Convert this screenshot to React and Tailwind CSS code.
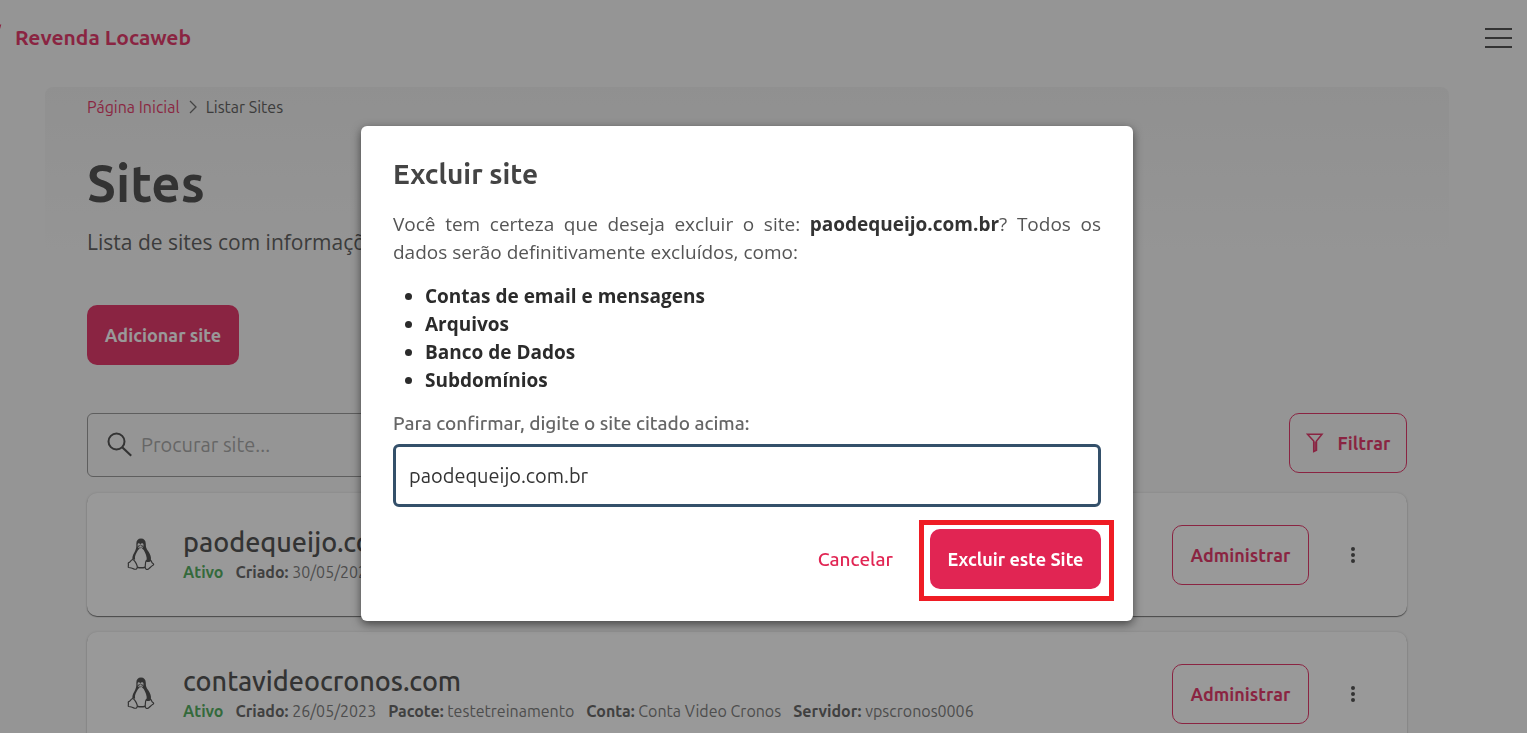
import React from "react";

const uiFont = "font-['Ubuntu','Noto_Sans',sans-serif]";

const sites = [
  {
    domain: "paodequeijo.com.br",
    status: "Ativo",
    details: [["Criado", "30/05/2023"]],
  },
  {
    domain: "contavideocronos.com",
    status: "Ativo",
    details: [
      ["Criado", "26/05/2023"],
      ["Pacote", "testetreinamento"],
      ["Conta", "Conta Video Cronos"],
      ["Servidor", "vpscronos0006"],
    ],
  },
];

const deletedItems = [
  "Contas de email e mensagens",
  "Arquivos",
  "Banco de Dados",
  "Subdomínios",
];

function LinuxIcon() {
  return (
    <svg viewBox="0 0 28 33" className="h-[33px] w-7 shrink-0" fill="none" aria-hidden="true">
      <path
        d="M9.300 6C9.300 2.500 11 .6 14 .6s4.800 2 4.800 5.400c0 4 1 5 2.800 7.800 1.700 2.700 2.700 5 2.300 8.200l-1.200 1.500-3-.8c.4-3.900-1.200-7.700-3-10.700l-2.700-2.500-2.900 2.500c-2 3.600-3.700 5.900-3 9.700l-2.800-.5c-.2-3 1.500-5.600 2.800-8.100C9.400 10 9.400 9 9.300 6z"
        fill="#333"
      />
      <path
        d="M10.600 6.500c.2-1.600 2-1.600 2.700 0 .7-1.600 2.900-1.600 3.200.2.400 2.300-1.200 4-3.100 4s-3-1.900-2.800-4.200z"
        fill="#f3f3f3"
      />
      <path d="M11 8.200l2.400-1.100 2.800 1.100-2.800 1.600z" stroke="#333" strokeWidth=".7" />
      <path
        d="M5.500 21.500c1.500 0 3.800 4 4.600 6.200.8 2.400-.7 4-2.800 3.400-1.800-.7-3.700-1.300-5.600-1.600-1-.3-.2-1.500-.3-2.700 0-1.300-.6-1.800.3-2.200 1.700-.4 2-2.400 3.800-3.100z"
        stroke="#333"
        strokeWidth="1.200"
      />
      <path
        d="M19.300 22.500c1 1.200 2.600 1.500 4.200-.2 1 0 .8 2.300 2.500 3.200 1 .6.8 1.300-.1 1.800-1.900 1-3.200 3-4.700 3.900-1.800.8-3.200-.3-3-2.300.3-2.100-.1-4.700 1.100-6.400z"
        stroke="#333"
        strokeWidth="1.200"
      />
      <path d="M10.200 29.300c2.800.8 5.400.7 8 0" stroke="#333" strokeWidth="1.500" />
    </svg>
  );
}

function SearchIcon() {
  return (
    <svg viewBox="0 0 26 26" className="size-[26px] shrink-0" fill="none" stroke="#333" strokeWidth="2" aria-hidden="true">
      <circle cx="9.500" cy="9.500" r="8" />
      <path d="M15.200 15.200l9 8.500" strokeWidth="2.200" />
    </svg>
  );
}

function FilterIcon() {
  return (
    <svg viewBox="0 0 18 20" className="h-5 w-[18px] shrink-0" fill="none" stroke="currentColor" strokeWidth="1.500" aria-hidden="true">
      <path d="M1.500 1.200h14.500L10.500 8v9.200l-2.800 1.300V8z" />
      <path d="M9.100 8.500v9" />
    </svg>
  );
}

function SiteCard({ site }) {
  return (
    <li className="flex h-[123px] items-center rounded-[10px] bg-white pr-[42px] pl-10 shadow-[0_1px_1px_rgba(0,0,0,0.6),0_0_3px_rgba(0,0,0,0.15)]">
      <LinuxIcon />
      <div className="mb-0.5 ml-7 flex-1">
        <h2 className="text-[27px] leading-9 font-medium text-[#333]">{site.domain}</h2>
        <p className="flex gap-3 text-base leading-6 text-[#666]">
          <span className="font-semibold text-[#35a145]">{site.status}</span>
          {site.details.map(([label, value]) => (
            <span key={label}>
              <b className="font-semibold text-[#4d4d4d]">{label}:</b> {value}
            </span>
          ))}
        </p>
      </div>
      <button type="button" className="h-[60px] w-[137px] rounded-[10px] border border-[#e11550] text-lg font-semibold text-[#e11550]">
        Administrar
      </button>
      <button type="button" aria-label="Mais opções" className="ml-8 flex w-6 justify-center">
        <svg viewBox="0 0 6 18" className="h-[18px] w-1.5" fill="#333" aria-hidden="true">
          <circle cx="3" cy="3" r="2" />
          <circle cx="3" cy="9" r="2" />
          <circle cx="3" cy="15" r="2" />
        </svg>
      </button>
    </li>
  );
}

function DeleteDialog() {
  return (
    <div className="fixed inset-0 flex items-start justify-center bg-[#333]/50 pt-[126px] pr-[33px]">
      <div
        role="dialog"
        aria-modal="true"
        aria-labelledby="dialog-title"
        className="w-full max-w-[772px] rounded-md bg-white p-8 font-['Open_Sans',sans-serif] shadow-[0_3px_10px_rgba(0,0,0,0.55)]"
      >
        <h2 id="dialog-title" className={`${uiFont} text-[28px] leading-8 font-bold text-[#444]`}>
          Excluir site
        </h2>
        <p className="mt-5 text-justify text-[19px] leading-7 text-[#555]">
          Você tem certeza que deseja excluir o site:{" "}
          <strong className="font-bold text-[#333]">paodequeijo.com.br</strong>? Todos os dados serão
          definitivamente excluídos, como:
        </p>
        <ul className="mt-4 list-disc pl-8 text-[19px] leading-7 font-bold text-[#2b2b2b]">
          {deletedItems.map((item) => (
            <li key={item}>{item}</li>
          ))}
        </ul>
        <div className={uiFont}>
          <label htmlFor="confirm-site" className="mt-4 block text-[19px] leading-[26px] font-medium text-[#666]">
            Para confirmar, digite o site citado acima:
          </label>
          <input
            id="confirm-site"
            type="text"
            defaultValue="paodequeijo.com.br"
            className="mt-2 block h-[63px] w-full rounded-md border-[3px] border-[#34506a] px-[13px] text-[20px] text-[#333] outline-none"
          />
          <div className="mt-[22px] flex items-center justify-end">
            <button type="button" className="h-[60px] px-[37px] text-[19px] font-medium text-[#e12553]">
              Cancelar
            </button>
            <div className="relative">
              <button type="button" className="h-[60px] w-[171px] rounded-[10px] bg-[#e12553] text-lg font-semibold text-white">
                Excluir este Site
              </button>
              <span className="pointer-events-none absolute -top-[9px] -right-[13px] -bottom-3 -left-[11px] border-5 border-[#ef1c24]" />
            </div>
          </div>
        </div>
      </div>
    </div>
  );
}

export default function App() {
  return (
    <div className={`${uiFont} h-screen overflow-hidden bg-[#f7f7f7]`}>
      <header className="flex h-[87px] items-start justify-between pr-[15px]">
        <div className="flex pt-[22px]">
          <svg viewBox="0 0 15 8" className="h-2 w-[15px]" aria-hidden="true">
            <path d="M0 2.500h1.300L0 7z" fill="#e11550" />
          </svg>
          <a href="#" className="text-[21px] leading-[30px] font-semibold text-[#e11550]">
            Revenda Locaweb
          </a>
        </div>
        <button type="button" aria-label="Menu" className="flex flex-col gap-[7px] pt-7">
          <span className="h-0.5 w-[27px] bg-[#333]" />
          <span className="h-0.5 w-[27px] bg-[#333]" />
          <span className="h-0.5 w-[27px] bg-[#333]" />
        </button>
      </header>

      <main className="mr-[78px] ml-[45px] rounded-lg bg-[linear-gradient(#ededed,#f7f7f7_180px)] px-[42px]">
        <nav aria-label="Breadcrumb" className="flex items-center gap-2 pt-2 text-base leading-6">
          <a href="#" className="text-[#e11550]">
            Página Inicial
          </a>
          <svg viewBox="0 0 10 14" className="h-3.5 w-2.5" fill="none" stroke="#555" strokeWidth="1.300" aria-hidden="true">
            <path d="M2 1l6 6-6 6" />
          </svg>
          <span className="text-[#444]">Listar Sites</span>
        </nav>

        <h1 className="mt-[30px] text-[51px] leading-[68px] font-semibold text-[#333]">Sites</h1>
        <p className="mt-[9px] font-['Open_Sans',sans-serif] text-[21px] leading-8 text-[#444]">
          Lista de sites com informações
        </p>

        <button type="button" className="mt-[47px] block h-[60px] w-[152px] rounded-[10px] bg-[#e11550] text-lg font-semibold text-white">
          Adicionar site
        </button>

        <div className="mt-12 flex items-start justify-between">
          <label className="flex h-16 w-3/4 items-center gap-2 rounded-md border border-[#888] px-[19px]">
            <SearchIcon />
            <input
              type="search"
              aria-label="Procurar site"
              placeholder="Procurar site..."
              className="w-full bg-transparent text-[20px] outline-none placeholder:text-[#999]"
            />
          </label>
          <button type="button" className="flex h-[60px] w-[118px] items-center justify-center gap-3.5 rounded-[10px] border border-[#e11550] text-lg font-semibold text-[#e11550]">
            <FilterIcon />
            Filtrar
          </button>
        </div>

        <ul className="mt-4 flex flex-col gap-4">
          {sites.map((site) => (
            <SiteCard key={site.domain} site={site} />
          ))}
        </ul>
      </main>

      <DeleteDialog />
    </div>
  );
}
